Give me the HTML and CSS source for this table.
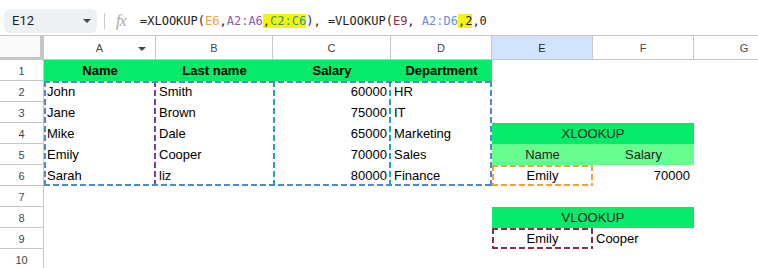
FILE: index.html
```html
<!DOCTYPE html>
<html>
<head>
<meta charset="utf-8">
<link rel="stylesheet" href="styles.css">
</head>
<body>
<div class="topbar">
  <div class="namebox"><span>E12</span><span class="tri"></span></div>
  <div class="divider"></div>
  <div class="fx">fx</div>
  <div class="formula"><span>=XLOOKUP(</span><span class="f-or">E6</span><span>,</span><span class="f-pu">A2:A6</span><span class="hl">,<span class="f-te">C2:C6</span></span><span>), =VLOOKUP(</span><span class="f-ma">E9</span><span>, </span><span class="f-bl">A2:D6</span><span class="hl">,2</span><span>,0</span></div>
</div>
<div class="sheet">
  <div class="grid cells">
    <div class="corner"></div>
    <div class="ch ch-a">A<span class="tri small"></span></div>
    <div class="ch">B</div>
    <div class="ch">C</div>
    <div class="ch">D</div>
    <div class="ch sel">E</div>
    <div class="ch">F</div>
    <div class="ch">G</div>

    <div class="rh">1</div>
    <div class="c hdr">Name</div>
    <div class="c hdr">Last name</div>
    <div class="c hdr">Salary</div>
    <div class="c hdr">Department</div>
    <div class="c"></div><div class="c"></div><div class="c"></div>

    <div class="rh">2</div>
    <div class="c">John</div><div class="c">Smith</div><div class="c num">60000</div><div class="c">HR</div>
    <div class="c"></div><div class="c"></div><div class="c"></div>

    <div class="rh">3</div>
    <div class="c">Jane</div><div class="c">Brown</div><div class="c num">75000</div><div class="c">IT</div>
    <div class="c"></div><div class="c"></div><div class="c"></div>

    <div class="rh">4</div>
    <div class="c">Mike</div><div class="c">Dale</div><div class="c num">65000</div><div class="c">Marketing</div>
    <div class="c title span2">XLOOKUP</div><div class="c"></div>

    <div class="rh">5</div>
    <div class="c">Emily</div><div class="c">Cooper</div><div class="c num">70000</div><div class="c">Sales</div>
    <div class="c sub">Name</div><div class="c sub">Salary</div><div class="c"></div>

    <div class="rh">6</div>
    <div class="c">Sarah</div><div class="c">liz</div><div class="c num">80000</div><div class="c">Finance</div>
    <div class="c mid">Emily</div><div class="c num">70000</div><div class="c"></div>

    <div class="rh">7</div>
    <div class="c"></div><div class="c"></div><div class="c"></div><div class="c"></div>
    <div class="c"></div><div class="c"></div><div class="c"></div>

    <div class="rh">8</div>
    <div class="c"></div><div class="c"></div><div class="c"></div><div class="c"></div>
    <div class="c title span2">VLOOKUP</div><div class="c"></div>

    <div class="rh">9</div>
    <div class="c"></div><div class="c"></div><div class="c"></div><div class="c"></div>
    <div class="c mid">Emily</div><div class="c">Cooper</div><div class="c"></div>

    <div class="rh">10</div>
    <div class="c"></div><div class="c"></div><div class="c"></div><div class="c"></div>
    <div class="c"></div><div class="c"></div><div class="c"></div>
  </div>
  <div class="grid marks">
    <div class="rng r-purple"></div>
    <div class="rng-sides r-teal"></div>
    <div class="rng r-blue"></div>
    <div class="rng r-orange"></div>
    <div class="rng r-maroon"></div>
  </div>
</div>
</body>
</html>
```
FILE: styles.css
```css
* { box-sizing: border-box; }
html, body { margin: 0; padding: 0; background: #fff; }
body {
  width: 758px;
  height: 268px;
  overflow: hidden;
  font-family: "Liberation Sans", Arial, sans-serif;
  color: #000;
}

/* formula bar */
.topbar {
  height: 35px;
  padding: 6px 0 0 4px;
  display: flex;
  align-items: center;
}
.namebox {
  width: 93px;
  height: 24px;
  background: #eef1f4;
  border-radius: 6px;
  display: flex;
  align-items: center;
  justify-content: space-between;
  padding: 0 6px 0 8px;
  font-family: Roboto, "Liberation Sans", sans-serif;
  font-size: 13px;
  color: #1f1f1f;
}
.tri {
  width: 0;
  height: 0;
  border-left: 4px solid transparent;
  border-right: 4px solid transparent;
  border-top: 4px solid #444746;
}
.divider {
  width: 1px;
  height: 16px;
  background: #c4c7c5;
  margin-left: 7px;
}
.fx {
  margin-left: 11px;
  font-family: "Liberation Serif", serif;
  font-style: italic;
  font-size: 16px;
  color: #a8a8a8;
  width: 24px;
  letter-spacing: -1px;
}
.formula {
  font-family: "DejaVu Sans Mono", "Liberation Mono", monospace;
  font-size: 12px;
  color: #1f1f1f;
  white-space: pre;
}
.f-or { color: #f3a03c; }
.f-pu { color: #8e5aa8; }
.f-te { color: #1c9f92; }
.f-ma { color: #8d2b4f; }
.f-bl { color: #6a8fd8; }
.hl { background: #f6f600; }

/* sheet */
.sheet { display: grid; }
.grid {
  grid-area: 1 / 1;
  display: grid;
  grid-template-columns: 44px 112px 117px 118px 101px 101px 101px 101px;
  grid-template-rows: 25px repeat(10, 21px);
}
.marks { pointer-events: none; }

.corner {
  background: #f8f9fa;
  border-top: 1px solid #c4c7c5;
  border-right: 4px solid #c4c7c5;
  border-bottom: 3px solid #c4c7c5;
}
.ch {
  border-top: 1px solid #c4c7c5;
  border-bottom: 1px solid #c4c7c5;
  border-right: 1px solid #c4c7c5;
  display: flex;
  align-items: center;
  justify-content: center;
  font-size: 11px;
  color: #444746;
  position: relative;
}
.ch.sel { background: #d3e3fd; color: #1f1f1f; }
.ch-a .small {
  position: absolute;
  right: 9px;
  top: 11px;
}
.rh {
  border-right: 1px solid #c4c7c5;
  border-bottom: 1px solid #c4c7c5;
  display: flex;
  align-items: center;
  justify-content: center;
  font-size: 11px;
  color: #444746;
  padding-top: 1px;
}
.c {
  font-size: 13px;
  line-height: 21px;
  padding: 0 3px;
  white-space: nowrap;
  overflow: hidden;
}
.c.num { text-align: right; padding-right: 4px; }
.c.mid { text-align: center; }
.c.hdr {
  background: #05ea68;
  font-weight: bold;
  text-align: center;
}
.c.title {
  background: #05ea68;
  text-align: center;
  color: #1f1f1f;
}
.c.sub {
  background: #68fd8f;
  text-align: center;
  color: #1f1f1f;
}
.span2 { grid-column: span 2; }

/* range highlight outlines */
.rng {
  --c: #4f87d8;
  background:
    repeating-linear-gradient(90deg, var(--c) 0 6px, transparent 6px 9px) left top / 100% 2px no-repeat,
    repeating-linear-gradient(90deg, var(--c) 0 6px, transparent 6px 9px) left bottom / 100% 2px no-repeat,
    repeating-linear-gradient(180deg, var(--c) 0 6px, transparent 6px 9px) left top / 2px 100% no-repeat,
    repeating-linear-gradient(180deg, var(--c) 0 6px, transparent 6px 9px) right top / 2px 100% no-repeat;
}
.rng-sides {
  --c: #21a2c6;
  background:
    repeating-linear-gradient(180deg, var(--c) 0 6px, transparent 6px 9px) left top / 2px 100% no-repeat,
    repeating-linear-gradient(180deg, var(--c) 0 6px, transparent 6px 9px) right top / 2px 100% no-repeat;
}
.r-blue { --c: #4f87d8; grid-column: 2 / 6; grid-row: 3 / 8; }
.r-purple { --c: #7d3f9c; grid-column: 2 / 3; grid-row: 3 / 8; }
.r-teal { --c: #21a2c6; grid-column: 4 / 5; grid-row: 3 / 8; }
.r-orange { --c: #f2a236; grid-column: 6 / 7; grid-row: 7 / 8; }
.r-maroon { --c: #8d2b4f; grid-column: 6 / 7; grid-row: 10 / 11; }
```
